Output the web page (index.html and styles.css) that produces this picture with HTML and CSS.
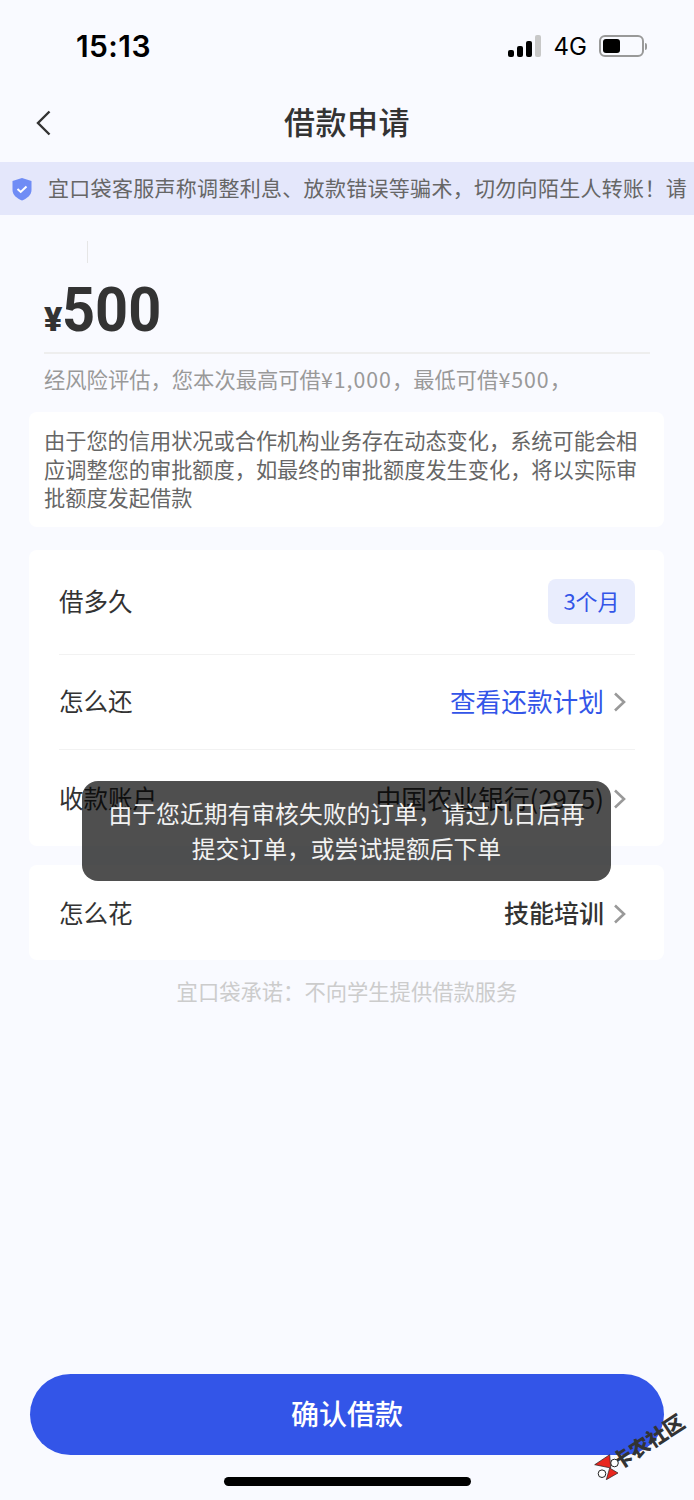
FILE: index.html
```html
<!DOCTYPE html>
<html lang="zh">
<head>
  <meta charset="UTF-8">
  <title>借款申请</title>
  <link rel="stylesheet" href="styles.css">
</head>
<body>
  <div class="page">
    <div class="status-bar">
      <span class="time">15:13</span>
      <div class="status-icons">
        <div class="signal">
          <i class="s1"></i><i class="s2"></i><i class="s3"></i><i class="s4"></i>
        </div>
        <span class="net">4G</span>
        <div class="battery"><i></i></div>
        <div class="battery-cap"></div>
      </div>
    </div>

    <div class="nav">
      <svg class="back" width="18" height="26" viewBox="0 0 18 26"><path d="M14.5 1.5 3 13l11.5 11.5" fill="none" stroke="#333" stroke-width="2.4"/></svg>
      <h1>借款申请</h1>
    </div>

    <div class="banner">
      <svg class="shield" width="22" height="24" viewBox="0 0 22 24">
        <path d="M11 1 20.500 4v9c0 5-4.500 8.500-9.500 10.500C6 21.500 1.500 18 1.500 13V4z" fill="#6f8cf5"/>
        <path d="M6.500 12l3.200 3 5.800-5.500" fill="none" stroke="#fff" stroke-width="2"/>
      </svg>
      <span class="banner-text">宜口袋客服声称调整利息、放款错误等骗术，切勿向陌生人转账！请</span>
    </div>

    <div class="amount-box">
      <div class="caret"></div>
      <div class="amount"><span class="yen">¥</span><span class="num">500</span></div>
      <p class="limit">经风险评估，您本次最高可借<span class="digits">¥1,000</span>，最低可借<span class="digits">¥500</span>，</p>
    </div>

    <div class="card notice">由于您的信用状况或合作机构业务存在动态变化，系统可能会相应调整您的审批额度，如最终的审批额度发生变化，将以实际审批额度发起借款</div>

    <div class="card rows">
      <div class="row row-term">
        <span class="label">借多久</span>
        <span class="tag">3个月</span>
      </div>
      <div class="row row-plan has-arrow">
        <span class="label">怎么还</span>
        <span class="value link">查看还款计划</span>
        <svg class="arrow" width="14" height="20" viewBox="0 0 14 20"><path d="M2 1.500 11 10l-9 8.500" fill="none" stroke="#999" stroke-width="2.600"/></svg>
      </div>
      <div class="row row-account has-arrow">
        <span class="label">收款账户</span>
        <span class="value">中国农业银行(2975)</span>
        <svg class="arrow" width="14" height="20" viewBox="0 0 14 20"><path d="M2 1.500 11 10l-9 8.500" fill="none" stroke="#999" stroke-width="2.600"/></svg>
      </div>
    </div>

    <div class="card rows usage">
      <div class="row row-use has-arrow">
        <span class="label">怎么花</span>
        <span class="value strong">技能培训</span>
        <svg class="arrow" width="14" height="20" viewBox="0 0 14 20"><path d="M2 1.500 11 10l-9 8.500" fill="none" stroke="#999" stroke-width="2.600"/></svg>
      </div>
    </div>

    <p class="promise">宜口袋承诺：不向学生提供借款服务</p>

    <button class="confirm" type="button">确认借款</button>
    <div class="home-bar"></div>

    <!-- 提示浮层 -->
    <div class="toast">由于您近期有审核失败的订单，请过几日后再提交订单，或尝试提额后下单</div>

    <!-- 水印 -->
    <div class="watermark">
      <svg class="wm-logo" width="26" height="26" viewBox="0 0 26 26">
        <circle cx="20.500" cy="9" r="3.800" fill="#fff" stroke="#222"/>
        <circle cx="8" cy="19.700" r="3.800" fill="#fff" stroke="#222"/>
        <path d="M.7 10.700 15.700.7 16.700 14z" fill="#e8261f" stroke="#222" stroke-width=".7"/>
        <path d="M12.300 25.700 24 19l-8.300-5z" fill="#e8261f" stroke="#222" stroke-width=".7"/>
      </svg>
      <span>卡农社区</span>
    </div>
  </div>
</body>
</html>
```

FILE: styles.css
```css
* {
  box-sizing: border-box;
}

body {
  margin: 0;
  background: #f9faff;
  font-family: "Noto Sans CJK SC", "Noto Sans", sans-serif;
  color: #333;
}

.page {
  position: relative;
  width: 694px;
  height: 1500px;
  overflow: hidden;
  display: flex;
  flex-direction: column;
}

.status-bar {
  height: 88px;
  padding: 4px 47px 0 76px;
  display: flex;
  justify-content: space-between;
  align-items: center;
  color: #000;
  font-family: Inter, "Liberation Sans", sans-serif;
}

.time {
  font-size: 30px;
  font-weight: 600;
  letter-spacing: 0.4px;
}

.status-icons {
  display: flex;
  align-items: center;
}

.signal {
  display: flex;
  align-items: flex-end;
  gap: 3px;
  height: 22px;
  margin-right: 13px;
}

.signal i {
  width: 6px;
  border-radius: 2px;
  background: #000;
}

.s1 { height: 7px; }
.s2 { height: 11px; }
.s3 { height: 16px; }
.s4 { height: 22px; background: #c8c8c8 !important; }

.net {
  font-size: 24px;
  font-weight: 400;
  margin-right: 12px;
}

.battery {
  width: 45px;
  height: 22px;
  border: 2px solid #999;
  border-radius: 6px;
  padding: 2px;
}

.battery i {
  display: block;
  width: 17px;
  height: 14px;
  border-radius: 3px;
  background: #000;
}

.battery-cap {
  width: 2px;
  height: 7px;
  margin-left: 1px;
  border-radius: 0 2px 2px 0;
  background: #999;
}

.nav {
  height: 74px;
  padding-bottom: 10px;
  position: relative;
  display: flex;
  align-items: center;
  justify-content: center;
}

.nav h1 {
  margin: 0;
  font-size: 31px;
  font-weight: 500;
  letter-spacing: 0.5px;
}

.back {
  position: absolute;
  left: 35px;
  top: 22px;
}

.banner {
  height: 53px;
  background: #e4e7fb;
  padding-left: 11px;
  display: flex;
  align-items: center;
  overflow: hidden;
  white-space: nowrap;
}

.shield {
  flex: none;
  margin-right: 15px;
}

.banner-text {
  font-size: 21px;
  letter-spacing: 0.3px;
  line-height: 30px;
  padding-bottom: 4px;
  color: #666;
}

.amount-box {
  margin: 26px 44px 0;
}

.caret {
  width: 1px;
  height: 22px;
  margin-left: 43px;
  background: #e6e6e6;
}

.amount {
  height: 91px;
  border-bottom: 2px solid #eeeeee;
  display: flex;
  align-items: baseline;
  line-height: 80px;
  padding-top: 7px;
  color: #333;
  font-family: Roboto, sans-serif;
  font-weight: 700;
}

.yen {
  font-size: 34px;
  font-weight: 900;
}

.num {
  display: inline-block;
  font-size: 62px;
  transform: scaleX(0.93);
  transform-origin: 0 100%;
}

.limit {
  margin: 11px 0 0;
  font-size: 21.300px;
  line-height: 28px;
  color: #999;
  white-space: nowrap;
}

.digits {
  letter-spacing: 1px;
}

.card {
  margin: 0 30px 0 29px;
  background: #fff;
  border-radius: 8px;
}

.notice {
  margin-top: 19px;
  padding: 14px 16px 14px 15px;
  height: 115px;
  font-size: 21.200px;
  line-height: 28.500px;
  color: #666;
}

.rows {
  margin-top: 23px;
  padding: 0 29px 0 30px;
}

.usage {
  margin-top: 19px;
}

.row {
  display: flex;
  align-items: center;
  border-bottom: 1px solid #f2f2f2;
}

.row:last-child {
  border-bottom: none;
}

.has-arrow {
  padding-right: 8px;
}

.row-term { height: 105px; }
.row-plan { height: 95px; }
.row-account { height: 96px; padding-top: 2px; }
.row-use { height: 95px; padding-top: 3px; }

.label {
  font-size: 24.500px;
  padding-bottom: 4px;
  color: #333;
  margin-right: auto;
}

.value {
  font-size: 25.700px;
  padding-bottom: 4px;
  color: #333;
}

.strong {
  font-size: 25px;
  font-weight: 500;
}

.link {
  color: #3355e8;
}

.arrow {
  margin-left: 9px;
}

.tag {
  width: 87px;
  height: 45px;
  margin-bottom: 2px;
  padding-bottom: 2px;
  border-radius: 8px;
  background: #e9edfd;
  color: #3355e8;
  font-size: 22px;
  display: flex;
  align-items: center;
  justify-content: center;
}

.promise {
  margin: 16px 0 0;
  text-align: center;
  font-size: 21.300px;
  line-height: 30px;
  color: #ccc;
}

.confirm {
  margin: auto 30px 0;
  height: 81px;
  padding: 0 0 4px;
  border: none;
  border-radius: 41px;
  background: #3355e8;
  color: #fff;
  font-family: inherit;
  font-size: 28px;
  font-weight: 500;
}

.home-bar {
  width: 247px;
  height: 9px;
  margin: 22px auto 14px;
  border-radius: 5px;
  background: #000;
}

.toast {
  position: absolute;
  left: 82px;
  top: 781px;
  width: 529px;
  height: 100px;
  padding: 14px 22px;
  border-radius: 16px;
  background: rgba(0, 0, 0, 0.69);
  color: #f2f2f2;
  font-size: 23.800px;
  line-height: 35px;
  text-align: center;
}

.watermark {
  position: absolute;
  left: 594px;
  top: 1454px;
  display: flex;
  align-items: center;
  gap: 0;
  transform: rotate(-33deg);
  transform-origin: 13px 13px;
  font-size: 20.500px;
  line-height: 26px;
  font-weight: 900;
  color: #333;
  white-space: nowrap;
}

.wm-logo {
  flex: none;
  margin-right: -6px;
  transform: rotate(33deg);
}
```
